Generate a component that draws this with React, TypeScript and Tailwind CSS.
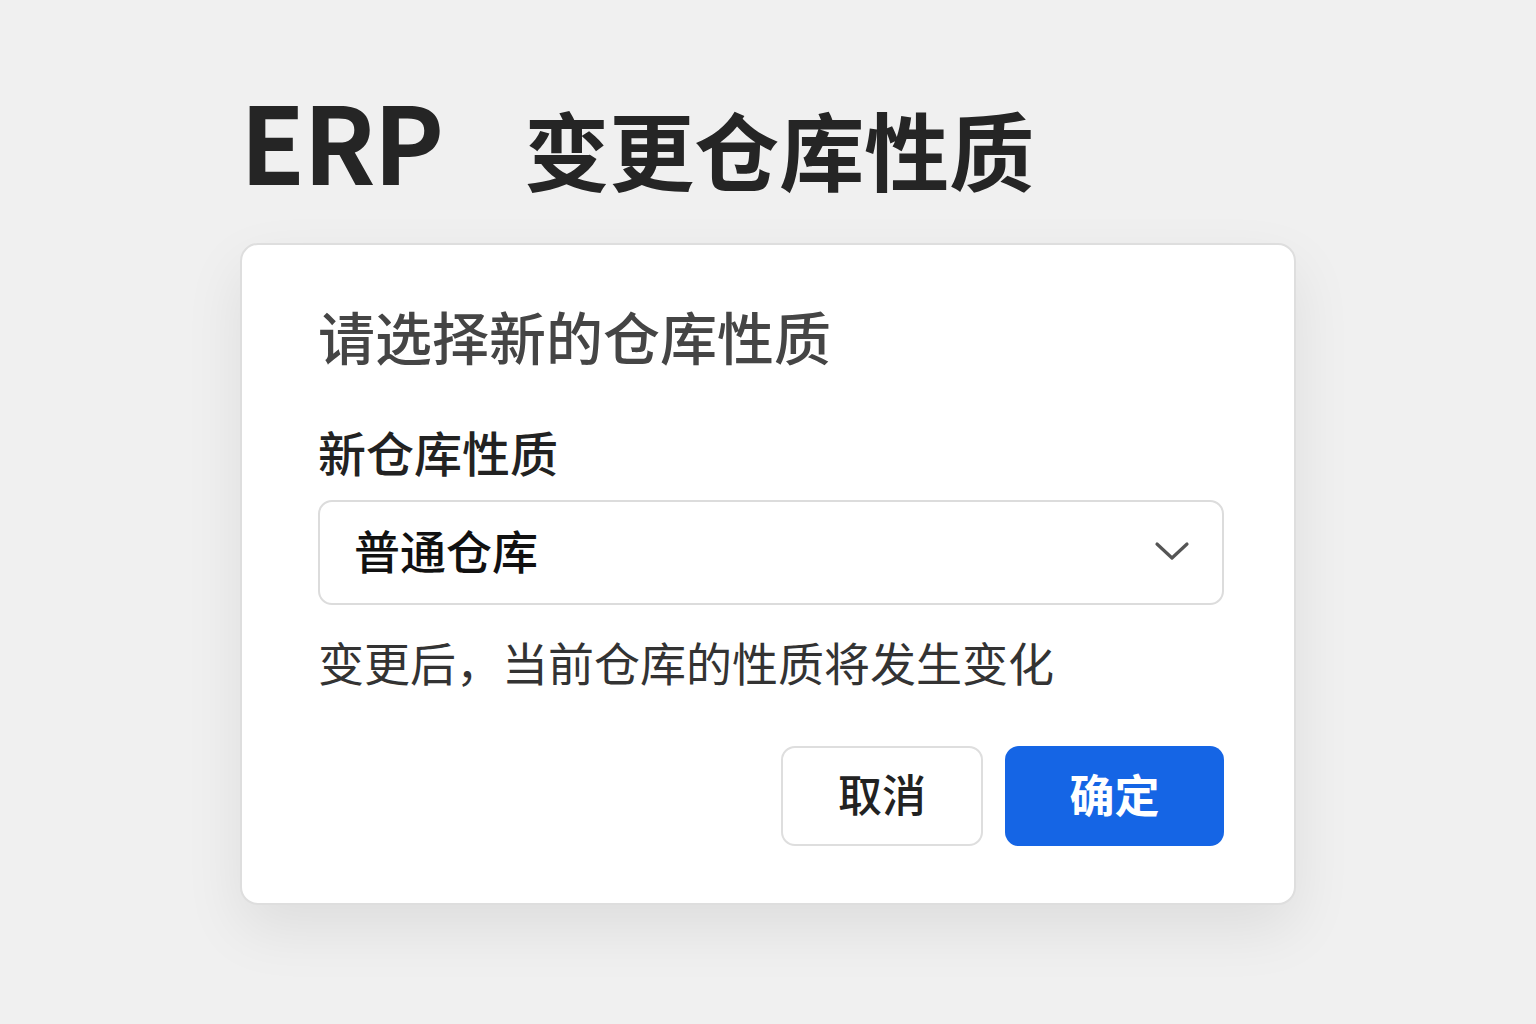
import React from "react";

const font = { fontFamily: '"Noto Sans CJK SC", "Noto Sans", sans-serif' };

export default function App() {
  return (
    <div
      className="w-[1536px] h-[1024px] bg-[#f0f0f0] flex flex-col items-center pt-[86px] text-[#222]"
      style={font}
    >
      <div className="w-[1056px] flex items-baseline">
        <div className="text-[106px] font-bold leading-none tracking-[-2px] text-[#252525]">ERP</div>
        <div className="ml-[82px] text-[85px] font-bold leading-none text-[#252525]">变更仓库性质</div>
      </div>

      <div className="mt-[51px] w-[1056px] bg-white border-2 border-[#dedede] rounded-[18px] shadow-[0_24px_60px_rgba(0,0,0,0.08)] pl-[76px] pr-[70px] pt-[62px] pb-[57px] flex flex-col">
        <div className="text-[57px] font-medium leading-none text-[#454545]">请选择新的仓库性质</div>

        <div className="mt-[63px] text-[48px] font-medium leading-none text-[#222]">新仓库性质</div>

        <div className="mt-[25px] h-[105px] border-2 border-[#dcdcdc] rounded-[14px] flex items-center justify-between pl-[34px] pr-[32px]">
          <span className="text-[46px] font-medium leading-none text-[#111] pb-[8px]">普通仓库</span>
          <svg width="36" height="22" viewBox="0 0 36 22" fill="none" className="mb-[4px]">
            <path d="M3 4 L18 18 L33 4" stroke="#555" strokeWidth="3.2" strokeLinecap="round" strokeLinejoin="round" />
          </svg>
        </div>

        <div className="mt-[33px] text-[46px] leading-none text-[#333]">变更后，当前仓库的性质将发生变化</div>

        <div className="mt-[62px] flex justify-end gap-[22px]">
          <button className="w-[202px] h-[100px] bg-white border-2 border-[#dedede] rounded-[14px] text-[44px] font-medium leading-none text-[#222] flex items-center justify-center pb-[6px]">
            取消
          </button>
          <button className="w-[219px] h-[100px] bg-[#1565e5] rounded-[14px] text-[45px] font-bold leading-none text-white flex items-center justify-center pb-[6px]">
            确定
          </button>
        </div>
      </div>
    </div>
  );
}
